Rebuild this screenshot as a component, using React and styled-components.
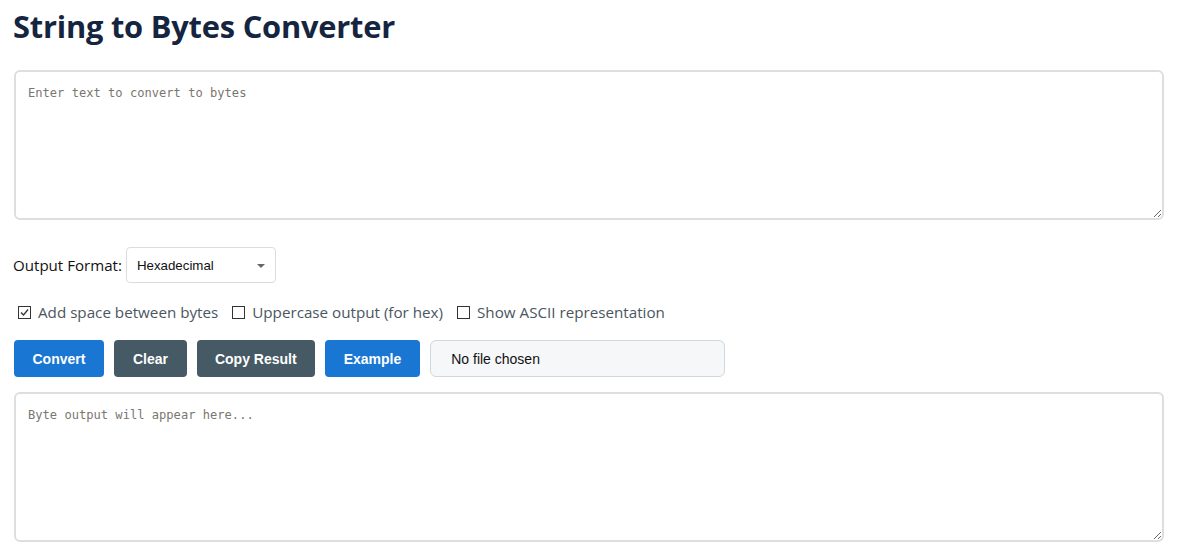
import React, { useState } from 'react'
import styled, { createGlobalStyle } from 'styled-components'

const GlobalStyle = createGlobalStyle`
  html, body {
    margin: 0;
    padding: 0;
    background: #ffffff;
  }
  body {
    font-family: 'Open Sans', 'Liberation Sans', sans-serif;
    color: #222;
  }
`

const Page = styled.div`
  width: 1150px;
  margin-left: 14px;
  display: flex;
  flex-direction: column;
`

const Title = styled.h1`
  margin: 7px 0 25px -1px;
  font-family: 'Open Sans', sans-serif;
  font-weight: 700;
  font-size: 30.8px;
  line-height: 38px;
  color: #15253f;
  letter-spacing: -0.2px;
`

const TextBox = styled.textarea`
  box-sizing: border-box;
  width: 100%;
  height: 150px;
  margin: 0;
  padding: 12px 12px;
  border: 2px solid #dedede;
  border-radius: 6px;
  font-family: 'DejaVu Sans Mono', 'Liberation Mono', monospace;
  font-size: 12.1px;
  line-height: 18px;
  color: #333;
  resize: vertical;
  outline: none;
  &::placeholder {
    color: #7a7670;
  }
`

const FormatRow = styled.div`
  display: flex;
  align-items: center;
  gap: 4px;
  margin: 27px 0 0 -1px;
`

const Label = styled.label`
  font-family: 'Open Sans', sans-serif;
  font-size: 15.1px;
  color: #111;
`

const SelectBox = styled.div`
  position: relative;
  box-sizing: border-box;
  width: 150px;
  height: 36px;
  border: 1px solid #dcdcdc;
  border-radius: 4px;
  display: flex;
  align-items: center;
  padding-left: 10px;
  font-family: 'Liberation Sans', Arial, sans-serif;
  font-size: 13.3px;
  color: #111;
  background: #fff;
`

const Caret = styled.span`
  position: absolute;
  right: 10px;
  top: 16px;
  width: 0;
  height: 0;
  border-left: 4px solid transparent;
  border-right: 4px solid transparent;
  border-top: 4px solid #666;
`

const OptionsRow = styled.div`
  display: flex;
  align-items: center;
  gap: 14px;
  margin: 19px 0 0 4px;
`

const Option = styled.label`
  display: flex;
  align-items: center;
  gap: 7px;
  font-family: 'Open Sans', sans-serif;
  font-size: 15.2px;
  color: #4b5660;
  cursor: pointer;
`

const Box = styled.span`
  box-sizing: border-box;
  width: 13px;
  height: 13px;
  border: 1px solid #333;
  background: #fff;
  display: flex;
  align-items: center;
  justify-content: center;
`

const ButtonRow = styled.div`
  display: flex;
  align-items: center;
  gap: 10px;
  margin: 18px 0 15px 0;
`

const Button = styled.button`
  height: 37px;
  padding: 0 ${p => p.$pad || 19}px;
  border: none;
  border-radius: 4px;
  background: ${p => (p.$variant === 'dark' ? '#455a64' : '#1976d2')};
  color: #fff;
  font-family: 'Liberation Sans', Arial, sans-serif;
  font-weight: 700;
  font-size: 14px;
  cursor: pointer;
`

const FileBox = styled.div`
  box-sizing: border-box;
  width: 295px;
  height: 37px;
  border: 1px solid #cfd8dc;
  border-radius: 6px;
  background: #f5f7f9;
  display: flex;
  align-items: center;
  padding-left: 20px;
  font-family: 'Liberation Sans', Arial, sans-serif;
  font-size: 14px;
  color: #111;
`

function Check({ checked, onToggle, children }) {
  return (
    <Option onClick={onToggle}>
      <Box>
        {checked && (
          <svg width="11" height="11" viewBox="0 0 11 11">
            <path d="M2 5.5 L4.5 8 L9 2.5" fill="none" stroke="#333" strokeWidth="1.3" />
          </svg>
        )}
      </Box>
      {children}
    </Option>
  )
}

export default function App() {
  const [opts, setOpts] = useState({ space: true, upper: false, ascii: false })
  const toggle = k => setOpts(o => ({ ...o, [k]: !o[k] }))

  return (
    <Page>
      <GlobalStyle />
      <Title>String to Bytes Converter</Title>
      <TextBox placeholder="Enter text to convert to bytes" />
      <FormatRow>
        <Label>Output Format:</Label>
        <SelectBox>
          Hexadecimal
          <Caret />
        </SelectBox>
      </FormatRow>
      <OptionsRow>
        <Check checked={opts.space} onToggle={() => toggle('space')}>Add space between bytes</Check>
        <Check checked={opts.upper} onToggle={() => toggle('upper')}>Uppercase output (for hex)</Check>
        <Check checked={opts.ascii} onToggle={() => toggle('ascii')}>Show ASCII representation</Check>
      </OptionsRow>
      <ButtonRow>
        <Button $pad={18.5}>Convert</Button>
        <Button $variant="dark">Clear</Button>
        <Button $variant="dark" $pad={18}>Copy Result</Button>
        <Button>Example</Button>
        <FileBox>No file chosen</FileBox>
      </ButtonRow>
      <TextBox placeholder="Byte output will appear here..." readOnly />
    </Page>
  )
}
